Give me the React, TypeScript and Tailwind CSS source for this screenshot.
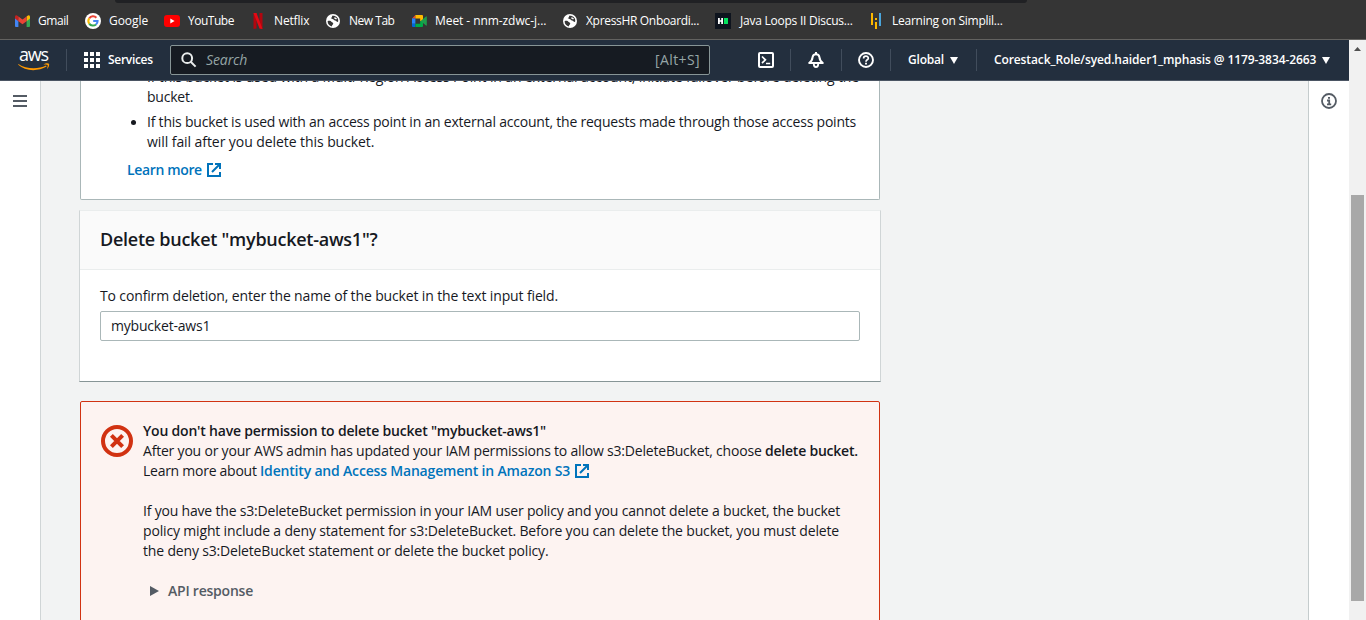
import React from "react";

function Globe() {
  return (
    <svg width="14" height="14" viewBox="0 0 14 14">
      <circle cx="7" cy="7" r="7" fill="#fff" />
      <path d="M1.6 7.2 C3 6.4 5 6.8 5.6 8 C6.4 8.6 7.4 8.6 7.2 9.8 C6.8 10.8 6 11.2 5.8 12.4 C3.6 12 1.6 10 1.6 7.2 Z" fill="#353535" />
      <path d="M6 1.8 C6.6 3 5.4 3.8 4.8 4.4 C5.6 5.2 7.2 4.8 7.8 5.8 C8.2 7 9.8 6.2 10.4 7.2 C11 8.2 11.6 8.2 12.2 7.6 C12.8 4 10 1.4 6 1.8 Z" fill="#353535" />
      <path d="M8.6 3 L11 4.6 L10.2 5.6 L8.2 4.4 Z" fill="#fff" />
    </svg>
  );
}

function Gmail() {
  return (
    <svg width="15" height="12" viewBox="0 0 15 12">
      <path d="M0 2 L3.4 4.4 V12 H1 Q0 12 0 11 Z" fill="#4285f4" />
      <path d="M15 2 L11.6 4.4 V12 H14 Q15 12 15 11 Z" fill="#34a853" />
      <path d="M11.6 1.4 Q15 -1 15 2 V3.6 L11.6 6.2 Z" fill="#fbbc04" />
      <path d="M3.4 1.4 Q0 -1 0 2 V3.6 L3.4 6.2 Z" fill="#c5221f" />
      <path d="M3.4 1.4 L7.5 4.4 L11.6 1.4 V6.2 L7.5 9.2 L3.4 6.2 Z" fill="#ea4335" />
    </svg>
  );
}

function Google() {
  return (
    <svg width="16" height="16" viewBox="0 0 16 16">
      <circle cx="8" cy="8" r="8" fill="#fff" />
      <g fill="none" strokeWidth="2">
        <path d="M4.2 5.4 A4.6 4.6 0 0 1 11.4 4.8" stroke="#ea4335" />
        <path d="M4.2 5.4 A4.6 4.6 0 0 0 4.2 10.6" stroke="#fbbc05" />
        <path d="M4.2 10.6 A4.6 4.6 0 0 0 11 11.5" stroke="#34a853" />
        <path d="M11 11.5 A4.6 4.6 0 0 0 12.6 8 H8.2" stroke="#4285f4" />
      </g>
    </svg>
  );
}

function YouTube() {
  return (
    <svg width="16" height="12" viewBox="0 0 16 12">
      <rect width="16" height="12" rx="3" fill="#f00" />
      <path d="M6.3 3.5 L10.6 6 L6.3 8.5 Z" fill="#fff" />
    </svg>
  );
}

function Netflix() {
  return (
    <svg width="10" height="16" viewBox="0 0 10 16">
      <path d="M0.5 0 H3.5 V15.5 L0.5 16 Z" fill="#b1060f" />
      <path d="M6.5 0 H9.5 V16 L6.5 15.5 Z" fill="#b1060f" />
      <path d="M0.5 0 H3.5 L9.5 16 L6.5 15.5 Z" fill="#e50914" />
    </svg>
  );
}

function Meet() {
  return (
    <svg width="15" height="12" viewBox="0 0 15 12">
      <path d="M0 3.4 L3.4 0 V3.4 Z" fill="#ea4335" />
      <path d="M0 3.4 H3.4 V8.8 H0 Z" fill="#2684fc" />
      <path d="M0 8.8 H3.4 V12 H1 Q0 12 0 11 Z" fill="#0066da" />
      <path d="M3.4 0 H10 Q11 0 11 1 V6 L8.2 6 V3.4 H3.4 Z" fill="#ffba00" />
      <path d="M3.4 8.8 H8.2 V6 H11 V11 Q11 12 10 12 H3.4 Z" fill="#00ac47" />
      <path d="M8.6 6 L14 1.4 Q14.8 1 14.8 2 V10 Q14.8 11 14 10.6 Z" fill="#1f9d4c" />
    </svg>
  );
}

function HackerRank() {
  return (
    <svg width="16" height="16" viewBox="0 0 16 16">
      <rect width="16" height="16" fill="#0e141e" />
      <path d="M3 5 H4.8 V7.2 H6.2 V5 H8 V11 H6.2 V8.8 H4.8 V11 H3 Z" fill="#fff" />
      <rect x="9" y="5" width="4" height="6" fill="#05e35e" />
    </svg>
  );
}

function Simplilearn() {
  return (
    <svg width="10" height="16" viewBox="0 0 10 16">
      <path d="M0 0 H2 V12 H0 Z M4 5 H6 V7 H4 Z M4 9 H6 V16 H4 Z" fill="#fbb800" />
      <rect x="8" y="0" width="2" height="13" fill="#4aa5dc" />
    </svg>
  );
}

function External() {
  return (
    <svg width="14" height="14" viewBox="0 0 14 14" fill="none" stroke="#0073bb" strokeWidth="2">
      <path d="M6 1 H1 V13 H13 V9" />
      <path d="M8 1 H13 V6 M13 1 L5 9" />
    </svg>
  );
}

function Bookmark({ children, className }: { children: React.ReactNode; className: string }) {
  return <div className={"flex h-4 shrink-0 items-center " + className}>{children}</div>;
}

function BookmarksBar() {
  return (
    <div className="h-10 border-b border-[#636260] bg-[#353535] font-['Open_Sans',sans-serif] text-[12px] leading-4 text-white">
      <div className="ml-[115px] h-[3px] w-[912px] rounded-b-[12px] bg-[#202124]" />
      <div className="flex h-9 items-center pl-[15px] whitespace-nowrap">
        <Bookmark className="w-[70px] gap-2"><Gmail /><span className="tracking-[-0.45px]">Gmail</span></Bookmark>
        <Bookmark className="w-[79px] gap-2"><Google /><span className="tracking-[-0.05px]">Google</span></Bookmark>
        <Bookmark className="w-[89px] gap-2"><YouTube /><span className="tracking-[-0.48px]">YouTube</span></Bookmark>
        <Bookmark className="w-[73px] gap-[11px]"><Netflix /><span className="tracking-[-0.15px]">Netflix</span></Bookmark>
        <Bookmark className="w-[86px] gap-[9px]"><Globe /><span className="tracking-[-0.48px]">New Tab</span></Bookmark>
        <Bookmark className="w-[151px] gap-2"><Meet /><span className="tracking-[-0.07px]">Meet - nnm-zdwc-j...</span></Bookmark>
        <Bookmark className="w-[152px] gap-[9px]"><Globe /><span className="tracking-[-0.32px]">XpressHR Onboardi...</span></Bookmark>
        <Bookmark className="w-[156px] gap-[9px]"><HackerRank /><span className="tracking-[-0.24px]">Java Loops II Discus...</span></Bookmark>
        <Bookmark className="gap-[11px]"><Simplilearn /><span className="tracking-[-0.26px]">Learning on Simplil...</span></Bookmark>
      </div>
    </div>
  );
}

function AwsLogo() {
  return (
    <div className="flex h-[21px] w-8 flex-col">
      <span className="h-[13px] pl-px font-['Open_Sans',sans-serif] text-[18px] leading-[9px] font-medium tracking-[-1.2px] text-white">aws</span>
      <svg width="32" height="8" viewBox="0 0 32 8">
        <path d="M0.4 1 C8 6.2 20 6.6 28 2.6 L28.6 3.6 C20 8.8 7 8.4 0.2 1.8 Z" fill="#ff9900" />
        <path d="M25.4 1.4 C27.6 0 30.4 0 31 0.8 C31.6 2 30.8 4.6 29 6 C29.4 4.4 30 2.8 29.6 2 C28.8 1.4 27 1.6 25.4 1.4 Z" fill="#ff9900" />
      </svg>
    </div>
  );
}

function Caret() {
  return (
    <svg width="8" height="7" viewBox="0 0 8 7"><path d="M0 0 H8 L4 7 Z" fill="#fff" /></svg>
  );
}

function Divider() {
  return <div className="h-[22px] w-px shrink-0 bg-[#414d5c]" />;
}

function Header() {
  return (
    <header className="flex h-[41px] shrink-0 items-center border-b border-[#4b5563] bg-[#232f3e] pl-[18px] font-['Open_Sans',sans-serif] text-[12px] font-semibold whitespace-nowrap text-white">
      <AwsLogo />
      <div className="ml-4 flex"><Divider /></div>
      <svg className="ml-[17px]" width="16" height="16" viewBox="0 0 16 16" fill="#fff">
        <path d="M0 0h4v4H0zM6 0h4v4H6zM12 0h4v4h-4zM0 6h4v4H0zM6 6h4v4H6zM12 6h4v4h-4zM0 12h4v4H0zM6 12h4v4H6zM12 12h4v4h-4z" />
      </svg>
      <span className="ml-2 w-[45px] tracking-[-0.3px]">Services</span>
      <div className="ml-[17px] flex h-[30px] w-[540px] items-center rounded-[2px] border border-[#879596] bg-[#161b22] px-[10px] text-[14px] font-normal text-[#95a5a6]">
        <svg width="16" height="16" viewBox="0 0 16 16" fill="none" stroke="#eaeded" strokeWidth="2">
          <circle cx="6.2" cy="6.2" r="4.9" /><path d="M9.7 9.7 L14.6 14.6" />
        </svg>
        <span className="ml-[9px] flex-1 pb-[2px] tracking-[-0.1px] italic">Search</span>
        <span className="-mr-px pb-[2px] tracking-[0.38px]">[Alt+S]</span>
      </div>
      <svg className="ml-12" width="16" height="16" viewBox="0 0 16 16" fill="none" stroke="#fff" strokeWidth="2">
        <rect x="1" y="1" width="14" height="14" rx="1" /><path d="M4 4.5 L7.4 7.8 L4 11.1 M8 11.5 H12.2" strokeWidth="1.7" />
      </svg>
      <div className="ml-4 flex"><Divider /></div>
      <svg className="ml-[17px]" width="16" height="16" viewBox="0 0 16 16" fill="none" stroke="#fff" strokeWidth="2">
        <path d="M8 0 V2" />
        <path d="M1.2 11 H14.8 C12.2 9.2 11.6 7.6 11.4 5.2 C11 1.2 5 1.2 4.6 5.2 C4.4 7.6 3.8 9.2 1.2 11 Z" strokeLinejoin="round" />
        <path d="M5.8 12 C5.8 16 10.2 16 10.2 12" strokeWidth="1.8" />
      </svg>
      <div className="ml-[17px] flex"><Divider /></div>
      <svg className="ml-4" width="16" height="16" viewBox="0 0 16 16" fill="none" stroke="#fff" strokeWidth="1.9">
        <circle cx="8" cy="8" r="7" /><path d="M5.6 6.4 C5.6 3.4 10.3 3.4 10.3 6.2 C10.3 7.9 8 7.7 8 9.7" strokeWidth="1.7" /><path d="M8 10.8 V12.4" />
      </svg>
      <div className="ml-4 flex"><Divider /></div>
      <span className="ml-[17px] w-[36px] tracking-[-0.19px]">Global</span>
      <span className="ml-[6px]"><Caret /></span>
      <div className="ml-[18px] flex"><Divider /></div>
      <span className="ml-[17px] w-[322px] tracking-[-0.1px]">Corestack_Role/syed.haider1_mphasis @ 1179-3834-2663</span>
      <span className="ml-[6px]"><Caret /></span>
    </header>
  );
}

function BucketNotes() {
  return (
    <section className="h-[119px] overflow-hidden rounded-b-[2px] border border-t-0 border-[#aab7b8] bg-white pl-[66px]">
      <div className="-mt-[14px] leading-5">
        <p className="tracking-[-0.132px]">If this bucket is used with a Multi-Region Access Point in an external account, initiate failover before deleting the</p>
        <p className="tracking-[-0.22px]">bucket.</p>
      </div>
      <div className="-ml-4 mt-[5px] flex leading-5">
        <span className="mt-2 mr-[11px] h-[5px] w-[5px] rounded-full bg-[#16191f]" />
        <div>
          <p className="tracking-[-0.217px]">If this bucket is used with an access point in an external account, the requests made through those access points</p>
          <p className="tracking-[-0.07px]">will fail after you delete this bucket.</p>
        </div>
      </div>
      <a className="mt-2 -ml-5 flex items-center gap-[5px] leading-5 font-semibold text-[#0073bb]">
        <span className="w-[75px] tracking-[-0.36px]">Learn more</span><External />
      </a>
    </section>
  );
}

function ConfirmCard() {
  return (
    <section className="mt-[10px] h-[172px] w-[802px] -translate-x-px border border-t-[#eaeded] border-r-[#d0d5d6] border-b-[#879596] border-l-[#d0d5d6] bg-white">
      <h2 className="h-[59px] border-b border-[#eaeded] bg-[#fafafa] pt-[17px] pl-5 text-[18px] leading-[22px] font-semibold tracking-[-0.26px]">Delete bucket "mybucket-aws1"?</h2>
      <div className="px-5 pt-4">
        <label className="block leading-5 tracking-[-0.138px]">To confirm deletion, enter the name of the bucket in the text input field.</label>
        <div className="mt-[5px] flex h-[30px] items-center rounded-[2px] border border-[#aab7b8] px-[10px] pb-[2px] tracking-[-0.2px]">mybucket-aws1</div>
      </div>
    </section>
  );
}

function PermissionAlert() {
  return (
    <section className="mt-[19px] flex h-[300px] rounded-[2px] border border-[#d13212] bg-[#fdf3f1] pt-[19px] pl-5 leading-5">
      <svg className="mt-[4px] mr-[10px] shrink-0" width="32" height="32" viewBox="0 0 32 32" fill="none" stroke="#d13212" strokeWidth="4">
        <circle cx="16" cy="16" r="14" /><path d="M10.4 10.4 L21.6 21.6 M21.6 10.4 L10.4 21.6" />
      </svg>
      <div>
        <p className="font-semibold tracking-[-0.2px]">You don't have permission to delete bucket "mybucket-aws1"</p>
        <p className="flex whitespace-pre"><span className="tracking-[-0.199px]">After you or your AWS admin has updated your IAM permissions to allow s3:DeleteBucket, choose </span><b className="font-semibold tracking-[-0.23px]">delete bucket.</b></p>
        <p className="flex items-center whitespace-pre"><span className="tracking-[-0.263px]">Learn more about </span><a className="mr-[5px] font-semibold tracking-[-0.184px] text-[#0073bb]">Identity and Access Management in Amazon S3</a><External /></p>
        <p className="mt-5 tracking-[-0.192px]">If you have the s3:DeleteBucket permission in your IAM user policy and you cannot delete a bucket, the bucket</p>
        <p className="tracking-[-0.163px]">policy might include a deny statement for s3:DeleteBucket. Before you can delete the bucket, you must delete</p>
        <p className="tracking-[-0.17px]">the deny s3:DeleteBucket statement or delete the bucket policy.</p>
        <p className="mt-5 flex items-center pl-[7px] font-semibold text-[#545b64]">
          <svg className="mr-[9px]" width="9" height="10" viewBox="0 0 9 10"><path d="M0 0 L9 5 L0 10 Z" fill="#545b64" /></svg>
          <span className="tracking-[-0.228px]">API response</span>
        </p>
      </div>
    </section>
  );
}

export default function App() {
  return (
    <div className="flex h-[620px] w-[1366px] flex-col overflow-hidden bg-white">
      <BookmarksBar />
      <div className="flex min-h-0 flex-1">
        <div className="flex min-w-0 flex-1 flex-col">
          <Header />
          <div className="flex min-h-0 flex-1">
            <nav className="w-[41px] shrink-0 border-r border-[#d0d5d6] bg-white pt-[14px] pl-[13px]">
              <svg width="14" height="12" viewBox="0 0 14 12" fill="#545b64"><path d="M0 0h14v2H0zM0 5h14v2H0zM0 10h14v2H0z" /></svg>
            </nav>
            <main className="min-w-0 flex-1 overflow-hidden bg-[#f2f3f3] pl-[39px] font-['Open_Sans',sans-serif] text-[14px] whitespace-nowrap text-[#16191f]">
              <div className="w-[800px]">
                <BucketNotes />
                <ConfirmCard />
                <PermissionAlert />
              </div>
            </main>
            <aside className="w-[41px] shrink-0 border-l border-[#c5cccd] bg-white pt-3 pl-3">
              <svg width="16" height="16" viewBox="0 0 16 16" fill="none" stroke="#545b64" strokeWidth="1.8">
                <circle cx="8" cy="8" r="7" /><path d="M7 4.9 H9 M6 7.5 H8.2 V11.4 M6 11.4 H10.2" />
              </svg>
            </aside>
          </div>
        </div>
        <div className="flex w-[17px] shrink-0 flex-col items-center bg-[#f1f1f1] pt-[7px]">
          <svg width="7" height="4" viewBox="0 0 7 4"><path d="M0 4 L3.5 0 L7 4 Z" fill="#505050" /></svg>
          <div className="mt-[144px] mr-px h-[406px] w-[13px] bg-[#a8a8a8]" />
        </div>
      </div>
    </div>
  );
}
